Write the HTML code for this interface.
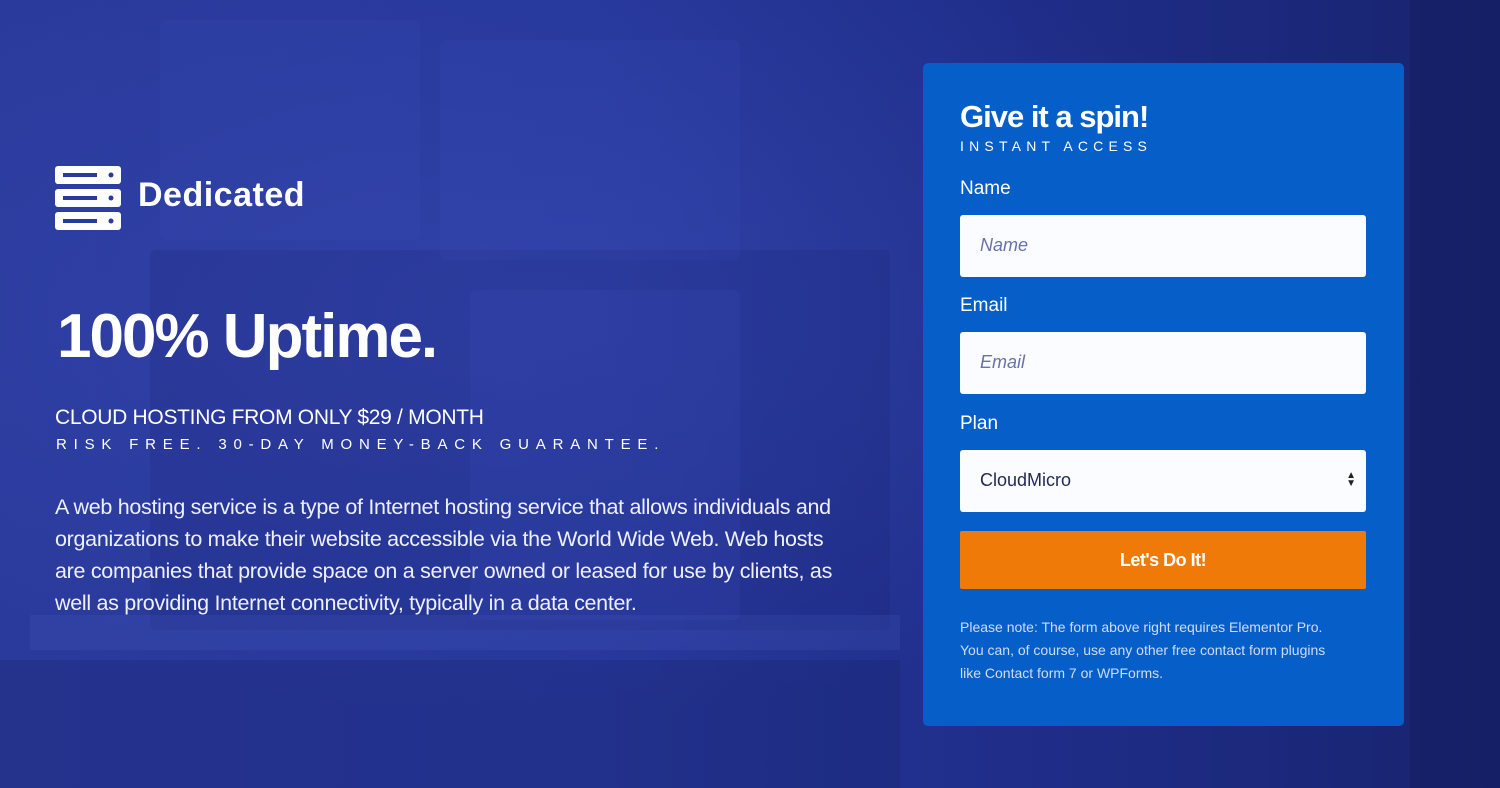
<!DOCTYPE html>
<html><head><meta charset="utf-8"><style>
*{margin:0;padding:0;box-sizing:border-box}
body{width:1500px;height:788px;overflow:hidden;font-family:"Liberation Sans",sans-serif;color:#fff;position:relative;
background:linear-gradient(90deg,#2a3a9c 0%,#26379a 40%,#1f2d88 70%,#18246e 100%);}
.bg div{position:absolute;border-radius:6px}
.t{position:absolute;white-space:nowrap}
.panel{position:absolute;left:923px;top:63px;width:481px;height:663px;background:#065fc8;border-radius:5px}
.inp{position:absolute;left:37px;width:406px;height:62px;background:#fbfcff;border-radius:3px;color:#6a72a8;font-style:italic;font-size:18px;padding:20px 0 0 20px}
.lbl{position:absolute;left:37px;font-size:19px}
</style></head><body>
<div class="bg">
<div style="left:0;top:0;width:1500px;height:788px;background:radial-gradient(ellipse at 35% 40%,rgba(70,90,200,.3),transparent 60%);border-radius:0"></div>
<div style="left:150px;top:250px;width:740px;height:380px;background:rgba(20,30,100,.15)"></div>
<div style="left:470px;top:290px;width:270px;height:330px;background:rgba(60,80,190,.18)"></div>
<div style="left:160px;top:20px;width:260px;height:220px;background:rgba(60,80,190,.15)"></div>
<div style="left:440px;top:40px;width:300px;height:220px;background:rgba(60,80,190,.15)"></div>
<div style="left:0;top:660px;width:900px;height:128px;background:rgba(15,22,80,.18);border-radius:0"></div>
<div style="left:30px;top:615px;width:870px;height:35px;background:rgba(90,110,210,.15);border-radius:0"></div>
<div style="left:1410px;top:0;width:90px;height:788px;background:rgba(10,16,70,.2);border-radius:0"></div>
</div>
<svg class="t" style="left:55px;top:166px" width="66" height="64" viewBox="0 0 66 64">
<g fill="#fff"><rect x="0" y="0" width="66" height="18" rx="3"/><rect x="0" y="23" width="66" height="18" rx="3"/><rect x="0" y="46" width="66" height="18" rx="3"/></g>
<g fill="#2a3a9c"><rect x="8" y="7" width="34" height="4"/><rect x="8" y="30" width="34" height="4"/><rect x="8" y="53" width="34" height="4"/>
<circle cx="56" cy="9" r="2.5"/><circle cx="56" cy="32" r="2.5"/><circle cx="56" cy="55" r="2.5"/></g></svg>
<div class="t" style="left:138px;top:176px;font-size:34px;font-weight:bold;letter-spacing:0.5px">Dedicated</div>
<div class="t" style="left:57px;top:301px;font-size:62px;font-weight:bold;letter-spacing:-2px">100% Uptime.</div>
<div class="t" style="left:55px;top:406px;font-size:21px;letter-spacing:-0.3px">CLOUD HOSTING FROM ONLY $29 / MONTH</div>
<div class="t" style="left:56px;top:436px;font-size:15px;letter-spacing:6.8px">RISK FREE. 30-DAY MONEY-BACK GUARANTEE.</div>
<div class="t" style="left:55px;top:491px;font-size:21.5px;line-height:32px;color:#eef0ff;letter-spacing:-0.3px">A web hosting service is a type of Internet hosting service that allows individuals and<br>organizations to make their website accessible via the World Wide Web. Web hosts<br>are companies that provide space on a server owned or leased for use by clients, as<br>well as providing Internet connectivity, typically in a data center.</div>
<div class="panel">
<div class="t" style="left:37px;top:36px;font-size:31px;font-weight:bold;letter-spacing:-1px">Give it a spin!</div>
<div class="t" style="left:37px;top:75px;font-size:14px;letter-spacing:5.2px">INSTANT ACCESS</div>
<div class="lbl" style="top:115px">Name</div>
<div class="inp" style="top:152px">Name</div>
<div class="lbl" style="top:232px">Email</div>
<div class="inp" style="top:269px">Email</div>
<div class="lbl" style="top:350px">Plan</div>
<div class="inp" style="top:387px;font-style:normal;color:#222a55">CloudMicro<span style="position:absolute;right:10px;top:22px;font-size:10px;line-height:8px;color:#222">▲<br>▼</span></div>
<div style="position:absolute;left:37px;top:468px;width:406px;height:58px;background:#f07a08;border-radius:2px;text-align:center;font-weight:bold;font-size:18px;padding-top:19px;letter-spacing:-.5px">Let's Do It!</div>
<div class="t" style="left:37px;top:553px;font-size:14px;line-height:23px;color:#cfdcf5;letter-spacing:0">Please note: The form above right requires Elementor Pro.<br>You can, of course, use any other free contact form plugins<br>like Contact form 7 or WPForms.</div>
</div>
</body></html>
